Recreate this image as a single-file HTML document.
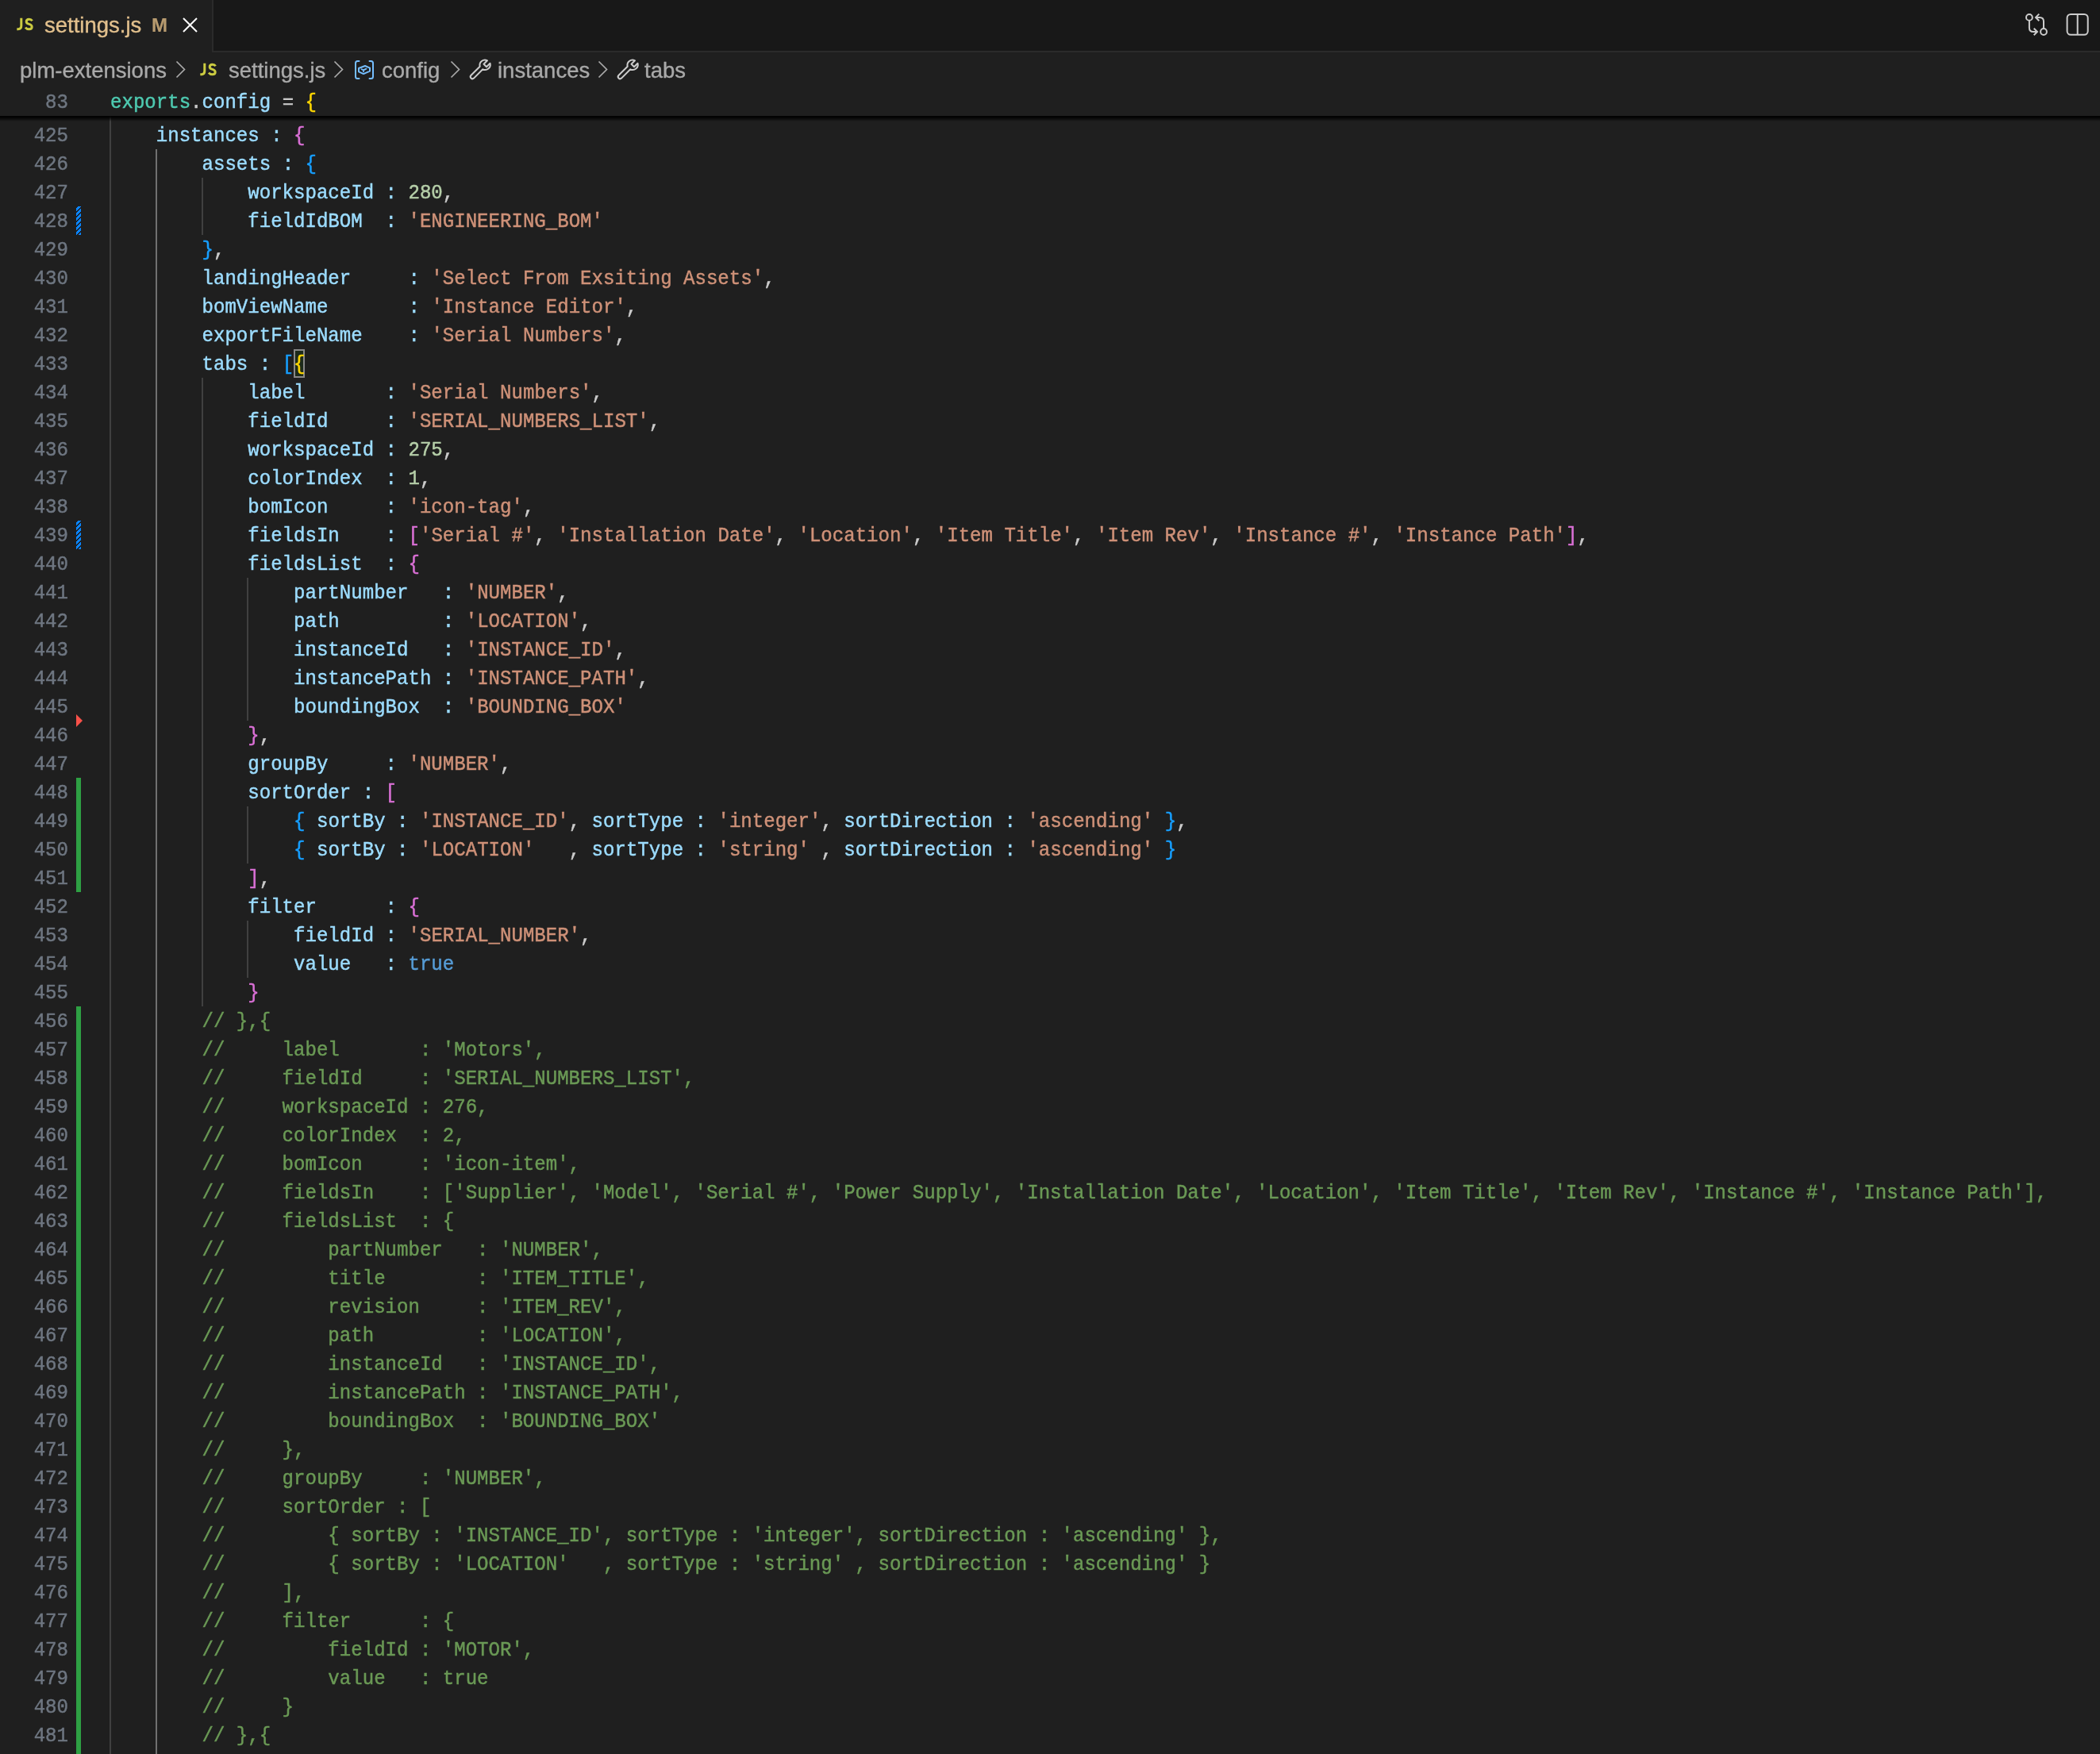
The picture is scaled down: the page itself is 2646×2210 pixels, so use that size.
<!DOCTYPE html>
<html><head><meta charset="utf-8">
<style>
html,body{margin:0;padding:0;width:2646px;height:2210px;overflow:hidden;background:#1f1f1f;}
body{position:relative;font-family:"Liberation Sans",sans-serif;}
.tabbar{position:absolute;left:0;top:0;width:2646px;height:64px;background:#181818;border-bottom:2px solid #2b2b2b;}
.tab{position:absolute;left:0;top:0;width:267px;height:66px;background:#1f1f1f;border-right:2px solid #2b2b2b;}
.js{position:absolute;font-family:"Liberation Sans",sans-serif;font-weight:bold;color:#cbcb41;letter-spacing:-1px;}
.ui{position:absolute;white-space:pre;font-size:27.5px;line-height:32px;margin-top:1px;-webkit-text-stroke:0.35px currentColor;will-change:transform;}
.crumb{color:#a9a9a9;}
.mono{font-family:"Liberation Mono",monospace;}
.l{position:absolute;left:139px;height:36px;line-height:36px;white-space:pre;font-family:"Liberation Mono",monospace;font-size:24.07px;color:#cccccc;transform:translateY(2px) scaleY(1.09);transform-origin:0 24px;-webkit-text-stroke:0.45px currentColor;will-change:transform;}
.ln{position:absolute;left:0;width:86px;text-align:right;height:36px;line-height:36px;font-family:"Liberation Mono",monospace;font-size:24.07px;color:#6e7681;transform:translateY(2px) scaleY(1.09);transform-origin:0 24px;-webkit-text-stroke:0.45px currentColor;will-change:transform;}
i{font-style:normal;}
.p{color:#9cdcfe}.s{color:#ce9178}.n{color:#b5cea8}.k{color:#569cd6}.c{color:#6a9955}
.g{color:#ffd700}.o{color:#da70d6}.b{color:#179fff}.e{color:#4ec9b0}
.gd{position:absolute;width:2px;background:#404040;}
.gd.act{background:#707070;}
.sticky{position:absolute;left:0;top:110px;width:2646px;height:36px;background:#1f1f1f;}
.shadow{position:absolute;left:0;top:146px;width:2646px;height:7px;background:linear-gradient(to bottom,rgba(0,0,0,0.95) 0,rgba(0,0,0,0.85) 2px,rgba(0,0,0,0) 7px);}
svg{position:absolute;}
</style></head><body>
<div class="tabbar"></div>
<div class="tab"></div>
<svg style="left:21px;top:22px" width="22" height="17" viewBox="0 0 22 17"><g fill="none" stroke="#cbcb41" stroke-width="3"><path d="M5.8 0.7V10.6Q5.8 14.8 1.8 14.8H0.3"/><path d="M19.6 4.3Q18.3 2.3 15.7 2.3Q12.2 2.3 12.2 5.3Q12.2 7.6 15.6 8.4Q19.2 9.3 19.2 12.1Q19.2 14.8 15.6 14.8Q12.6 14.8 11 12.7"/></g></svg>
<div class="ui" style="left:56px;top:15px;color:#e2c08d;">settings.js</div>
<div class="ui" style="left:191px;top:15px;color:#b89b6f;font-size:24px;font-weight:bold;-webkit-text-stroke:0.2px currentColor;">M</div>
<svg style="left:230px;top:22px" width="19" height="19" viewBox="0 0 19 19"><path d="M1 1L18 18M18 1L1 18" stroke="#ffffff" stroke-width="2" fill="none"/></svg>

<svg style="left:2546px;top:10px" width="92" height="42" viewBox="2546 10 92 42">
<g fill="none" stroke="#cccccc" stroke-width="2">
<circle cx="2556.9" cy="21.9" r="3.9"/><circle cx="2575" cy="40" r="3.9"/>
<path d="M2556.9 25.8V35Q2556.9 40 2561.9 40H2566.8"/><path d="M2562.7 35.7L2567 40L2562.7 44.3"/>
<path d="M2575 36.1V26.9Q2575 21.9 2570 21.9H2565.2"/><path d="M2569.3 17.6L2565 21.9L2569.3 26.2"/>
<rect x="2604.6" y="18" width="26.1" height="25.8" rx="4.5" ry="4.5"/>
<path d="M2617.7 18V43.8"/>
</g></svg>

<!-- breadcrumbs -->
<div class="ui crumb" style="left:25px;top:72px;">plm-extensions</div>
<svg style="left:221px;top:76px" width="14" height="26" viewBox="0 0 14 26"><path d="M1.5 1.5L11.5 11.5L1.5 21.5" fill="none" stroke="#a9a9a9" stroke-width="1.7"/></svg>
<svg style="left:252px;top:79px" width="22" height="17" viewBox="0 0 22 17"><g fill="none" stroke="#cbcb41" stroke-width="3"><path d="M5.8 0.7V10.6Q5.8 14.8 1.8 14.8H0.3"/><path d="M19.6 4.3Q18.3 2.3 15.7 2.3Q12.2 2.3 12.2 5.3Q12.2 7.6 15.6 8.4Q19.2 9.3 19.2 12.1Q19.2 14.8 15.6 14.8Q12.6 14.8 11 12.7"/></g></svg>
<div class="ui crumb" style="left:288px;top:72px;">settings.js</div>
<svg style="left:420px;top:76px" width="14" height="26" viewBox="0 0 14 26"><path d="M1.5 1.5L11.5 11.5L1.5 21.5" fill="none" stroke="#a9a9a9" stroke-width="1.7"/></svg>
<svg style="left:440px;top:70px" width="40" height="36" viewBox="440 70 40 36">
<g fill="none" stroke="#75beff" stroke-width="2" stroke-linejoin="round" stroke-linecap="round">
<path d="M452.5 77H450.5Q448 77 448 79.5V96.5Q448 99 450.5 99H452.5"/><path d="M465.5 77H467.5Q470 77 470 79.5V96.5Q470 99 467.5 99H465.5"/>
<path d="M460 83L466 85.6V89.6L458 93.1L452 90.4V86Z"/><path d="M455.6 87.3L458 88.4L461.5 86.6M458 88.4V90.3" stroke-width="1.8"/>
</g></svg>
<div class="ui crumb" style="left:481px;top:72px;">config</div>
<svg style="left:567px;top:76px" width="14" height="26" viewBox="0 0 14 26"><path d="M1.5 1.5L11.5 11.5L1.5 21.5" fill="none" stroke="#a9a9a9" stroke-width="1.7"/></svg>
<svg style="left:586px;top:70px" width="36" height="36" viewBox="586 70 36 36"><path d="M604.7 83.7A6.5 6.5 0 0 1 614 76.3L609.5 80.8L613 84.3L617.5 79.8A6.5 6.5 0 0 1 608.3 87.3L597 98.6A2.55 2.55 0 0 1 593.4 95Z" fill="none" stroke="#cccccc" stroke-width="2" stroke-linejoin="round"/></svg>
<div class="ui crumb" style="left:627px;top:72px;">instances</div>
<svg style="left:753px;top:76px" width="14" height="26" viewBox="0 0 14 26"><path d="M1.5 1.5L11.5 11.5L1.5 21.5" fill="none" stroke="#a9a9a9" stroke-width="1.7"/></svg>
<svg style="left:772px;top:70px" width="36" height="36" viewBox="586 70 36 36"><path d="M604.7 83.7A6.5 6.5 0 0 1 614 76.3L609.5 80.8L613 84.3L617.5 79.8A6.5 6.5 0 0 1 608.3 87.3L597 98.6A2.55 2.55 0 0 1 593.4 95Z" fill="none" stroke="#cccccc" stroke-width="2" stroke-linejoin="round"/></svg>
<div class="ui crumb" style="left:812px;top:72px;">tabs</div>

<!-- editor -->
<div class="gd" style="left:138.0px;top:116px;height:2124px"></div>
<div class="gd act" style="left:195.8px;top:188px;height:2052px"></div>
<div class="gd" style="left:253.5px;top:224px;height:72px"></div>
<div class="gd" style="left:253.5px;top:476px;height:792px"></div>
<div class="gd" style="left:311.3px;top:728px;height:180px"></div>
<div class="gd" style="left:311.3px;top:1016px;height:72px"></div>
<div class="gd" style="left:311.3px;top:1160px;height:72px"></div>
<!-- gutter decorations -->
<div style="position:absolute;left:96px;top:260px;width:6px;height:36px;background:repeating-linear-gradient(-45deg,#0a84ff 0 2.7px,#1f1f1f 2.7px 4.24px);"></div>
<div style="position:absolute;left:96px;top:656px;width:6px;height:36px;background:repeating-linear-gradient(-45deg,#0a84ff 0 2.7px,#1f1f1f 2.7px 4.24px);"></div>
<svg style="left:96px;top:900px" width="9" height="16" viewBox="0 0 9 16"><path d="M0 0L8 8L0 16Z" fill="#f85149"/></svg>
<div style="position:absolute;left:96px;top:980px;width:6px;height:144px;background:#2ea043;"></div>
<div style="position:absolute;left:96px;top:1268px;width:6px;height:942px;background:#2ea043;"></div>
<!-- bracket match box -->
<div style="position:absolute;left:370px;top:440px;width:10px;height:32px;border:2px solid #888888;background:#1d2a1a;"></div>
<div class="ln" style="top:152px">425</div>
<div class="ln" style="top:188px">426</div>
<div class="ln" style="top:224px">427</div>
<div class="ln" style="top:260px">428</div>
<div class="ln" style="top:296px">429</div>
<div class="ln" style="top:332px">430</div>
<div class="ln" style="top:368px">431</div>
<div class="ln" style="top:404px">432</div>
<div class="ln" style="top:440px">433</div>
<div class="ln" style="top:476px">434</div>
<div class="ln" style="top:512px">435</div>
<div class="ln" style="top:548px">436</div>
<div class="ln" style="top:584px">437</div>
<div class="ln" style="top:620px">438</div>
<div class="ln" style="top:656px">439</div>
<div class="ln" style="top:692px">440</div>
<div class="ln" style="top:728px">441</div>
<div class="ln" style="top:764px">442</div>
<div class="ln" style="top:800px">443</div>
<div class="ln" style="top:836px">444</div>
<div class="ln" style="top:872px">445</div>
<div class="ln" style="top:908px">446</div>
<div class="ln" style="top:944px">447</div>
<div class="ln" style="top:980px">448</div>
<div class="ln" style="top:1016px">449</div>
<div class="ln" style="top:1052px">450</div>
<div class="ln" style="top:1088px">451</div>
<div class="ln" style="top:1124px">452</div>
<div class="ln" style="top:1160px">453</div>
<div class="ln" style="top:1196px">454</div>
<div class="ln" style="top:1232px">455</div>
<div class="ln" style="top:1268px">456</div>
<div class="ln" style="top:1304px">457</div>
<div class="ln" style="top:1340px">458</div>
<div class="ln" style="top:1376px">459</div>
<div class="ln" style="top:1412px">460</div>
<div class="ln" style="top:1448px">461</div>
<div class="ln" style="top:1484px">462</div>
<div class="ln" style="top:1520px">463</div>
<div class="ln" style="top:1556px">464</div>
<div class="ln" style="top:1592px">465</div>
<div class="ln" style="top:1628px">466</div>
<div class="ln" style="top:1664px">467</div>
<div class="ln" style="top:1700px">468</div>
<div class="ln" style="top:1736px">469</div>
<div class="ln" style="top:1772px">470</div>
<div class="ln" style="top:1808px">471</div>
<div class="ln" style="top:1844px">472</div>
<div class="ln" style="top:1880px">473</div>
<div class="ln" style="top:1916px">474</div>
<div class="ln" style="top:1952px">475</div>
<div class="ln" style="top:1988px">476</div>
<div class="ln" style="top:2024px">477</div>
<div class="ln" style="top:2060px">478</div>
<div class="ln" style="top:2096px">479</div>
<div class="ln" style="top:2132px">480</div>
<div class="ln" style="top:2168px">481</div>
<div class="l" style="top:152px">    <i class="p">instances</i> <i class="p">:</i> <i class="o">{</i></div>
<div class="l" style="top:188px">        <i class="p">assets</i> <i class="p">:</i> <i class="b">{</i></div>
<div class="l" style="top:224px">            <i class="p">workspaceId</i> <i class="p">:</i> <i class="n">280</i>,</div>
<div class="l" style="top:260px">            <i class="p">fieldIdBOM</i>  <i class="p">:</i> <i class="s">&#x27;ENGINEERING_BOM&#x27;</i></div>
<div class="l" style="top:296px">        <i class="b">}</i>,</div>
<div class="l" style="top:332px">        <i class="p">landingHeader</i>     <i class="p">:</i> <i class="s">&#x27;Select From Exsiting Assets&#x27;</i>,</div>
<div class="l" style="top:368px">        <i class="p">bomViewName</i>       <i class="p">:</i> <i class="s">&#x27;Instance Editor&#x27;</i>,</div>
<div class="l" style="top:404px">        <i class="p">exportFileName</i>    <i class="p">:</i> <i class="s">&#x27;Serial Numbers&#x27;</i>,</div>
<div class="l" style="top:440px">        <i class="p">tabs</i> <i class="p">:</i> <i class="b">[</i><i class="g">{</i></div>
<div class="l" style="top:476px">            <i class="p">label</i>       <i class="p">:</i> <i class="s">&#x27;Serial Numbers&#x27;</i>,</div>
<div class="l" style="top:512px">            <i class="p">fieldId</i>     <i class="p">:</i> <i class="s">&#x27;SERIAL_NUMBERS_LIST&#x27;</i>,</div>
<div class="l" style="top:548px">            <i class="p">workspaceId</i> <i class="p">:</i> <i class="n">275</i>,</div>
<div class="l" style="top:584px">            <i class="p">colorIndex</i>  <i class="p">:</i> <i class="n">1</i>,</div>
<div class="l" style="top:620px">            <i class="p">bomIcon</i>     <i class="p">:</i> <i class="s">&#x27;icon-tag&#x27;</i>,</div>
<div class="l" style="top:656px">            <i class="p">fieldsIn</i>    <i class="p">:</i> <i class="o">[</i><i class="s">&#x27;Serial #&#x27;</i>, <i class="s">&#x27;Installation Date&#x27;</i>, <i class="s">&#x27;Location&#x27;</i>, <i class="s">&#x27;Item Title&#x27;</i>, <i class="s">&#x27;Item Rev&#x27;</i>, <i class="s">&#x27;Instance #&#x27;</i>, <i class="s">&#x27;Instance Path&#x27;</i><i class="o">]</i>,</div>
<div class="l" style="top:692px">            <i class="p">fieldsList</i>  <i class="p">:</i> <i class="o">{</i></div>
<div class="l" style="top:728px">                <i class="p">partNumber</i>   <i class="p">:</i> <i class="s">&#x27;NUMBER&#x27;</i>,</div>
<div class="l" style="top:764px">                <i class="p">path</i>         <i class="p">:</i> <i class="s">&#x27;LOCATION&#x27;</i>,</div>
<div class="l" style="top:800px">                <i class="p">instanceId</i>   <i class="p">:</i> <i class="s">&#x27;INSTANCE_ID&#x27;</i>,</div>
<div class="l" style="top:836px">                <i class="p">instancePath</i> <i class="p">:</i> <i class="s">&#x27;INSTANCE_PATH&#x27;</i>,</div>
<div class="l" style="top:872px">                <i class="p">boundingBox</i>  <i class="p">:</i> <i class="s">&#x27;BOUNDING_BOX&#x27;</i></div>
<div class="l" style="top:908px">            <i class="o">}</i>,</div>
<div class="l" style="top:944px">            <i class="p">groupBy</i>     <i class="p">:</i> <i class="s">&#x27;NUMBER&#x27;</i>,</div>
<div class="l" style="top:980px">            <i class="p">sortOrder</i> <i class="p">:</i> <i class="o">[</i></div>
<div class="l" style="top:1016px">                <i class="b">{</i> <i class="p">sortBy</i> <i class="p">:</i> <i class="s">&#x27;INSTANCE_ID&#x27;</i>, <i class="p">sortType</i> <i class="p">:</i> <i class="s">&#x27;integer&#x27;</i>, <i class="p">sortDirection</i> <i class="p">:</i> <i class="s">&#x27;ascending&#x27;</i> <i class="b">}</i>,</div>
<div class="l" style="top:1052px">                <i class="b">{</i> <i class="p">sortBy</i> <i class="p">:</i> <i class="s">&#x27;LOCATION&#x27;</i>   , <i class="p">sortType</i> <i class="p">:</i> <i class="s">&#x27;string&#x27;</i> , <i class="p">sortDirection</i> <i class="p">:</i> <i class="s">&#x27;ascending&#x27;</i> <i class="b">}</i></div>
<div class="l" style="top:1088px">            <i class="o">]</i>,</div>
<div class="l" style="top:1124px">            <i class="p">filter</i>      <i class="p">:</i> <i class="o">{</i></div>
<div class="l" style="top:1160px">                <i class="p">fieldId</i> <i class="p">:</i> <i class="s">&#x27;SERIAL_NUMBER&#x27;</i>,</div>
<div class="l" style="top:1196px">                <i class="p">value</i>   <i class="p">:</i> <i class="k">true</i></div>
<div class="l" style="top:1232px">            <i class="o">}</i></div>
<div class="l" style="top:1268px">        <i class="c">// },{</i></div>
<div class="l" style="top:1304px">        <i class="c">//     label       : &#x27;Motors&#x27;,</i></div>
<div class="l" style="top:1340px">        <i class="c">//     fieldId     : &#x27;SERIAL_NUMBERS_LIST&#x27;,</i></div>
<div class="l" style="top:1376px">        <i class="c">//     workspaceId : 276,</i></div>
<div class="l" style="top:1412px">        <i class="c">//     colorIndex  : 2,</i></div>
<div class="l" style="top:1448px">        <i class="c">//     bomIcon     : &#x27;icon-item&#x27;,</i></div>
<div class="l" style="top:1484px">        <i class="c">//     fieldsIn    : [&#x27;Supplier&#x27;, &#x27;Model&#x27;, &#x27;Serial #&#x27;, &#x27;Power Supply&#x27;, &#x27;Installation Date&#x27;, &#x27;Location&#x27;, &#x27;Item Title&#x27;, &#x27;Item Rev&#x27;, &#x27;Instance #&#x27;, &#x27;Instance Path&#x27;],</i></div>
<div class="l" style="top:1520px">        <i class="c">//     fieldsList  : {</i></div>
<div class="l" style="top:1556px">        <i class="c">//         partNumber   : &#x27;NUMBER&#x27;,</i></div>
<div class="l" style="top:1592px">        <i class="c">//         title        : &#x27;ITEM_TITLE&#x27;,</i></div>
<div class="l" style="top:1628px">        <i class="c">//         revision     : &#x27;ITEM_REV&#x27;,</i></div>
<div class="l" style="top:1664px">        <i class="c">//         path         : &#x27;LOCATION&#x27;,</i></div>
<div class="l" style="top:1700px">        <i class="c">//         instanceId   : &#x27;INSTANCE_ID&#x27;,</i></div>
<div class="l" style="top:1736px">        <i class="c">//         instancePath : &#x27;INSTANCE_PATH&#x27;,</i></div>
<div class="l" style="top:1772px">        <i class="c">//         boundingBox  : &#x27;BOUNDING_BOX&#x27;</i></div>
<div class="l" style="top:1808px">        <i class="c">//     },</i></div>
<div class="l" style="top:1844px">        <i class="c">//     groupBy     : &#x27;NUMBER&#x27;,</i></div>
<div class="l" style="top:1880px">        <i class="c">//     sortOrder : [</i></div>
<div class="l" style="top:1916px">        <i class="c">//         { sortBy : &#x27;INSTANCE_ID&#x27;, sortType : &#x27;integer&#x27;, sortDirection : &#x27;ascending&#x27; },</i></div>
<div class="l" style="top:1952px">        <i class="c">//         { sortBy : &#x27;LOCATION&#x27;   , sortType : &#x27;string&#x27; , sortDirection : &#x27;ascending&#x27; }</i></div>
<div class="l" style="top:1988px">        <i class="c">//     ],</i></div>
<div class="l" style="top:2024px">        <i class="c">//     filter      : {</i></div>
<div class="l" style="top:2060px">        <i class="c">//         fieldId : &#x27;MOTOR&#x27;,</i></div>
<div class="l" style="top:2096px">        <i class="c">//         value   : true</i></div>
<div class="l" style="top:2132px">        <i class="c">//     }</i></div>
<div class="l" style="top:2168px">        <i class="c">// },{</i></div>
<div class="sticky"></div>
<div class="shadow"></div>
<div class="ln" style="top:110px">83</div>
<div class="l" style="top:110px"><i class="e">exports</i>.<i class="p">config</i> = <i class="g">{</i></div>
</body></html>
